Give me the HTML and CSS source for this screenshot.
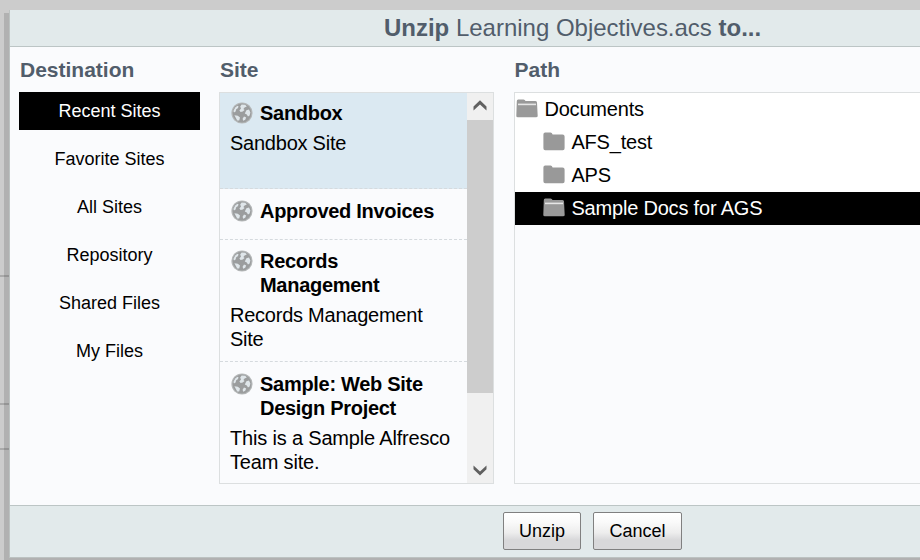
FILE: index.html
```html
<!DOCTYPE html>
<html lang="en">
<head>
<meta charset="utf-8">
<title>Unzip to</title>
<link rel="stylesheet" href="styles.css">
</head>
<body>
<svg class="defs" width="0" height="0" aria-hidden="true">
  <symbol id="globe" viewBox="0 0 22 22">
    <circle cx="11" cy="11" r="10.6" fill="#b4b7b8"/>
    <circle cx="11" cy="11" r="9.4" fill="#9b9d9e"/>
    <path d="M4.2 5.6L6.4 3.8 7.6 4.6 6.8 6.2 5.2 7.3 4.6 9.4 3 10.6 2.4 9zM10.6 2.6L14.2 2.8 15.8 4.4 13.6 5.4 12.4 7 13.6 8 11.8 9.6 9.6 10 8.4 8.6 10 6.6 9.2 4.4zM15.4 8.2L18 7.6 19.4 10.4 18.6 13.6 17 14.6 15.8 12.4 13.8 11.6zM3.4 13.2L6.8 13.8 9 15.6 8.2 18.6 6.2 18.4zM13 14.6L15.2 15.4 14.2 17.8 12.2 18.8 11.6 16.8z" fill="#dfe6ea"/>
  </symbol>
  <symbol id="folder" viewBox="0 0 22 19">
    <path d="M.4 2.5Q.4 .5 2.2 .5H7.5Q9 .5 9.6 2.5H19.5Q21.6 2.5 21.6 4.5V16.3Q21.6 18.2 19.8 18.2H2.2Q.4 18.2 .4 16.3z" fill="#999"/>
  </symbol>
  <symbol id="folder-open" viewBox="0 0 22 19">
    <path d="M.8 2.2Q.8 .5 2.2 .5H7.5Q9 .5 9.5 2H19.5Q21 2 21 3.5L21.7 17Q21.7 18.2 20 18.2H1.9Q.3 18.2 .3 17z" fill="#999"/>
    <path d="M2 4.6H20V6.2H2z" fill="#e6e6e6"/>
  </symbol>
</svg>
<div class="page-lines"><i></i><i></i><i></i></div>
<div class="dialog">
  <header class="dialog-head"><h1><b>Unzip</b> Learning Objectives.acs <b>to...</b></h1></header>
  <main class="dialog-body">
    <section class="destination">
      <h2>Destination</h2>
      <ul class="modes">
        <li class="selected">Recent Sites</li>
        <li>Favorite Sites</li>
        <li>All Sites</li>
        <li>Repository</li>
        <li>Shared Files</li>
        <li>My Files</li>
      </ul>
    </section>
    <section class="site">
      <h2>Site</h2>
      <div class="site-box">
        <div class="site-list">
          <article class="site-item picked">
            <svg class="globe"><use href="#globe"/></svg>
            <h3>Sandbox</h3>
            <p>Sandbox Site</p>
          </article>
          <article class="site-item brief">
            <svg class="globe"><use href="#globe"/></svg>
            <h3>Approved Invoices</h3>
          </article>
          <article class="site-item">
            <svg class="globe"><use href="#globe"/></svg>
            <h3>Records<br>Management</h3>
            <p>Records Management<br>Site</p>
          </article>
          <article class="site-item last">
            <svg class="globe"><use href="#globe"/></svg>
            <h3>Sample: Web Site<br>Design Project</h3>
            <p>This is a Sample Alfresco<br>Team site.</p>
          </article>
        </div>
        <div class="scrollbar">
          <svg class="arrow" viewBox="0 0 26 27"><path d="M6.5 13.6L13 7.2 19.5 13.6V17.4L13 11.4 6.5 17.4z"/></svg>
          <div class="thumb"></div>
          <svg class="arrow" viewBox="0 0 26 27"><path d="M6.5 13.2L13 19.6 19.5 13.2V9.4L13 15.4 6.5 9.4z"/></svg>
        </div>
      </div>
    </section>
    <section class="path">
      <h2>Path</h2>
      <div class="path-box">
        <div class="node root"><svg class="folder"><use href="#folder-open"/></svg><span>Documents</span></div>
        <div class="node"><svg class="folder"><use href="#folder"/></svg><span>AFS_test</span></div>
        <div class="node"><svg class="folder"><use href="#folder"/></svg><span>APS</span></div>
        <div class="node current"><svg class="folder"><use href="#folder-open"/></svg><span>Sample Docs for AGS</span></div>
      </div>
    </section>
  </main>
  <footer class="dialog-foot">
    <button class="unzip">Unzip</button>
    <button class="cancel">Cancel</button>
  </footer>
</div>
</body>
</html>
```
FILE: styles.css
```css
* { box-sizing: border-box; }
body {
  margin: 0;
  width: 920px;
  height: 560px;
  overflow: hidden;
  padding: 10px 0 0 9px;
  background: #ccc;
  font-family: "Liberation Sans", Arial, sans-serif;
  color: #000;
}
h1, h2, h3, p, ul { margin: 0; padding: 0; font-weight: normal; }
.defs { position: absolute; }
.page-lines { position: absolute; left: 0; top: 275px; width: 9px; }
.page-lines i { display: block; height: 2px; background: #aaa; }
.page-lines i:nth-child(2) { margin-top: 126px; }
.page-lines i:nth-child(3) { margin-top: 43px; }
.dialog {
  position: relative;
  width: 911px;
  height: 548px;
  border: solid #bcc2c1;
  border-width: 0 0 1px 1px;
  background: #fafbfd;
  box-shadow: 0 3px 0 0 #b1b1b1, -5px 3px 0 0 rgba(0, 0, 0, .13);
}
.dialog-head {
  height: 37px;
  border-bottom: 1px solid #bcc5c5;
  background: #e2eaeb;
  color: #515d6b;
}
h1 { padding-left: 374px; font-size: 24px; line-height: 36px; letter-spacing: -.01px; white-space: nowrap; }
.dialog-body { display: flex; height: 458px; padding: 10px 0 0 9px; }
h2 {
  height: 35px;
  font-size: 21px;
  line-height: 26px;
  font-weight: bold;
  color: #515d6b;
  padding-left: 1px;
}
.destination { flex: none; width: 181px; }
.modes { list-style: none; display: flex; flex-direction: column; gap: 10px; }
.modes li { height: 38px; line-height: 38px; text-align: center; font-size: 18px; }
.modes .selected { background: #000; color: #fff; }
.site { flex: none; width: 275px; margin-left: 19px; }
.site-box {
  display: flex;
  width: 275px;
  height: 392px;
  border: 1px solid #dcdfe0;
}
.site-list { width: 247px; overflow: hidden; }
.site-item {
  display: grid;
  grid-template-columns: 22px 1fr;
  column-gap: 7px;
  row-gap: 6px;
  align-content: start;
  height: 122px;
  padding: 9px 0 0 11px;
  border-bottom: 1px dashed #d5dade;
  font-size: 20px;
  line-height: 24px;
  white-space: nowrap;
}
.picked { height: 96px; padding-top: 8px; background: #dbe9f2; }
.brief { height: 51px; padding-top: 10px; }
.last { padding-top: 10px; border: 0; }
.globe { width: 22px; height: 22px; margin-top: 1px; }
h3 { font-size: 20px; font-weight: bold; letter-spacing: -.29px; }
.site-item p { grid-column: 1 / 3; margin-left: -1px; letter-spacing: -.24px; }
.last p { letter-spacing: -.18px; }
.scrollbar { display: flex; flex-direction: column; width: 26px; background: #f0f0f0; }
.arrow { width: 26px; height: 27px; fill: #606060; }
.thumb { height: 273px; margin-bottom: 63px; background: #cdcdcd; }
.path { flex: 1; min-width: 0; margin-left: 20px; }
.path h2 { padding-left: .5px; }
.path-box { height: 392px; border: 1px solid #dcdfe0; border-right: 0; }
.node {
  display: flex;
  height: 33px;
  padding-left: 28px;
  background: #fff;
  font-size: 20px;
  line-height: 32px;
  letter-spacing: -.19px;
}
.root { padding-left: 1px; }
.current { background: #000; color: #fff; }
.folder { width: 22px; height: 19px; margin: 6px 6.4px 0 0; }
.dialog-foot {
  display: flex;
  gap: 12px;
  height: 52px;
  padding: 6px 0 0 493px;
  border-top: 1px solid #bcc5c5;
  background: #e2eaeb;
}
button {
  height: 38px;
  padding: 0;
  border: 1px solid #808080;
  border-radius: 2px;
  background: linear-gradient(#fff 0%, #fafafa 25%, #ededed 55%, #d8d8da 75%, #d8d8da 100%);
  font: 18px/34px "Liberation Sans", Arial, sans-serif;
  color: #000;
}
.unzip { width: 78px; }
.cancel { width: 89px; }
```
